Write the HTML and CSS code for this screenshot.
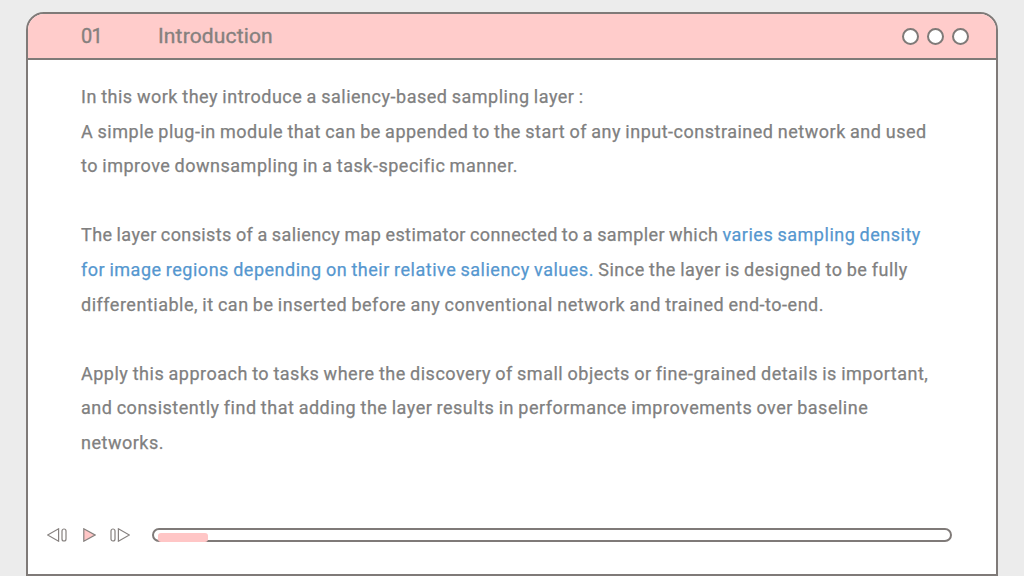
FILE: index.html
```html
<!DOCTYPE html>
<html lang="en">
<head>
<meta charset="utf-8">
<title>Introduction</title>
<link rel="stylesheet" href="styles.css">
</head>
<body>
<main class="window">
  <header class="titlebar">
    <span class="num">01</span>
    <span class="title">Introduction</span>
    <span class="dots"><i class="dot"></i><i class="dot"></i><i class="dot"></i></span>
  </header>
  <section class="content">
    <p>In this work they introduce a saliency-based sampling layer :<br>
    A simple plug-in module that can be appended to the start of any input-constrained network and used<br>
    to improve downsampling in a task-specific manner.</p>
    <p><span class="tight">The layer consists of a saliency map estimator connected to a sampler which </span><span class="hl">varies sampling density<br>
    for image regions depending on their relative saliency values.</span> Since the layer is designed to be fully<br>
    differentiable, it can be inserted before any conventional network and trained end-to-end.</p>
    <p>Apply this approach to tasks where the discovery of small objects or fine-grained details is important,<br>
    and consistently find that adding the layer results in performance improvements over baseline<br>
    networks.</p>
  </section>
  <footer class="player">
    <svg class="ctrl" width="20" height="14" viewBox="0 0 20 14"><path d="M11.6 .8V13.2L.6 7Z"/><rect x="15" y="1" width="4" height="12" rx="2"/></svg>
    <svg class="ctrl play" width="13" height="14" viewBox="0 0 13 14"><path d="M.8 .8V13.2L12 7Z"/></svg>
    <svg class="ctrl" width="20" height="14" viewBox="0 0 20 14"><rect x="1" y="1" width="4" height="12" rx="2"/><path d="M8.4 .8V13.2L19.4 7Z"/></svg>
    <div class="track"><div class="fill"></div></div>
  </footer>
</main>
</body>
</html>
```
FILE: styles.css
```css
html, body { margin: 0; height: 100%; overflow: hidden; }
body {
  background: #ececec;
  font-family: Roboto, "Liberation Sans", sans-serif;
  color: #808080;
  padding: 12px 0 0 26px;
  box-sizing: border-box;
}
.window {
  width: 972px;
  height: 564px;
  box-sizing: border-box;
  background: #fff;
  border: 2px solid #7f7a78;
  border-radius: 18px 18px 0 0;
  overflow: hidden;
  display: flex;
  flex-direction: column;
}
.titlebar {
  height: 46px;
  flex: none;
  box-sizing: border-box;
  background: #ffcccb;
  border-bottom: 2px solid #7f7a78;
  display: flex;
  align-items: center;
  padding: 0 27px 0 53px;
  font-size: 21px;
  letter-spacing: .15px;
  color: #85807e;
  -webkit-text-stroke: .35px #85807e;
}
.num { width: 77px; font-size: 20px; letter-spacing: -.8px; }
.title { flex: 1; }
.dots { display: flex; gap: 8px; }
.dot {
  width: 17px;
  height: 17px;
  box-sizing: border-box;
  border: 2px solid #7f7a78;
  border-radius: 50%;
  background: #fff;
}
.content {
  padding: 20.3px 0 0 53px;
  font-size: 18px;
  letter-spacing: .51px;
  word-spacing: -.7px;
  line-height: 34.55px;
  white-space: nowrap;
  flex: none;
  height: 465px;
  box-sizing: border-box;
  -webkit-text-stroke: .25px;
}
.content p { margin: 0 0 34.55px; }
.tight { letter-spacing: .4px; }
.hl { color: #5597cf; }
.player {
  display: flex;
  align-items: center;
  padding-left: 19px;
  height: 20px;
  gap: 14px;
}
.ctrl { fill: #fff; stroke: #86817f; stroke-width: 1.2; flex: none; }
.play { fill: #ffc6c6; margin-left: 2px; }
.track {
  margin-left: 8px;
  width: 800px;
  height: 14px;
  box-sizing: border-box;
  border: 2px solid #7f7a78;
  border-radius: 7px;
  padding: 3px 0 0 4px;
}
.fill { width: 50px; height: 9px; background: #ffc6c6; border-radius: 3px; }
```
